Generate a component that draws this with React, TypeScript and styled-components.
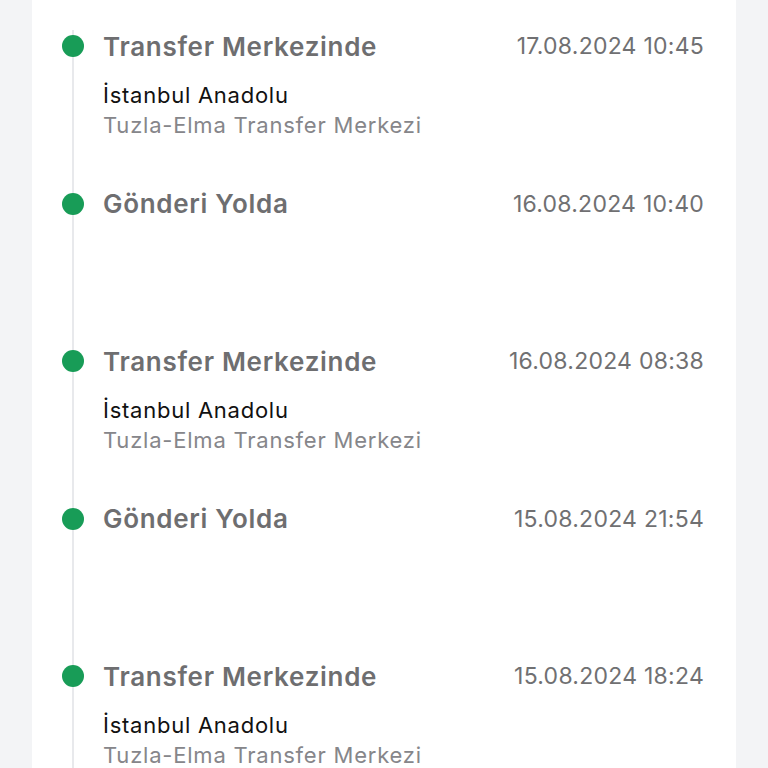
import React from "react";
import styled, { createGlobalStyle } from "styled-components";

const Global = createGlobalStyle`
  html, body { margin: 0; padding: 0; background: #f3f4f6; }
  body { font-family: Inter, "Noto Sans", sans-serif; -webkit-font-smoothing: antialiased; }
`;

const Page = styled.div`
  height: 768px;
  overflow: hidden;
  padding: 0 32px;
  background: #f3f4f6;
`;

const Card = styled.div`
  background: #ffffff;
  height: 768px;
  padding: 30px 32px 0 40px;
  box-sizing: border-box;
`;

const List = styled.div`
  border-left: 2px solid #e8e9ec;
  display: flex;
  flex-direction: column;
  height: 100%;
`;

const Item = styled.div`
  height: 157.5px;
  flex-shrink: 0;
  display: grid;
  grid-template-columns: 22px 1fr;
  column-gap: 19px;
  margin-left: -12px;
`;

const Dot = styled.span`
  width: 22px;
  height: 22px;
  border-radius: 50%;
  background: #189c57;
  margin-top: 5px;
`;

const Body = styled.div`
  display: flex;
  flex-direction: column;
`;

const Header = styled.div`
  display: flex;
  justify-content: space-between;
  align-items: center;
  height: 32px;
`;

const Title = styled.span`
  font-size: 26px;
  font-weight: 600;
  color: #6e6e70;
  letter-spacing: 0.7px;
`;

const Date = styled.span`
  font-size: 23px;
  font-weight: 400;
  color: #707072;
  letter-spacing: 0.25px;
`;

const City = styled.div`
  margin-top: 18px;
  font-size: 22px;
  line-height: 30px;
  color: #111111;
  letter-spacing: 0.75px;
`;

const Center = styled.div`
  font-size: 22px;
  line-height: 30px;
  color: #86868a;
  letter-spacing: 0.78px;
`;

type Ev = { title: string; date: string; city?: string; center?: string };

const events: Ev[] = [
  { title: "Transfer Merkezinde", date: "17.08.2024 10:45", city: "İstanbul Anadolu", center: "Tuzla-Elma Transfer Merkezi" },
  { title: "Gönderi Yolda", date: "16.08.2024 10:40" },
  { title: "Transfer Merkezinde", date: "16.08.2024 08:38", city: "İstanbul Anadolu", center: "Tuzla-Elma Transfer Merkezi" },
  { title: "Gönderi Yolda", date: "15.08.2024 21:54" },
  { title: "Transfer Merkezinde", date: "15.08.2024 18:24", city: "İstanbul Anadolu", center: "Tuzla-Elma Transfer Merkezi" },
];

export default function App() {
  return (
    <>
      <Global />
      <Page>
        <Card>
          <List>
            {events.map((e, i) => (
              <Item key={i}>
                <Dot />
                <Body>
                  <Header>
                    <Title>{e.title}</Title>
                    <Date>{e.date}</Date>
                  </Header>
                  {e.city && <City>{e.city}</City>}
                  {e.center && <Center>{e.center}</Center>}
                </Body>
              </Item>
            ))}
          </List>
        </Card>
      </Page>
    </>
  );
}
